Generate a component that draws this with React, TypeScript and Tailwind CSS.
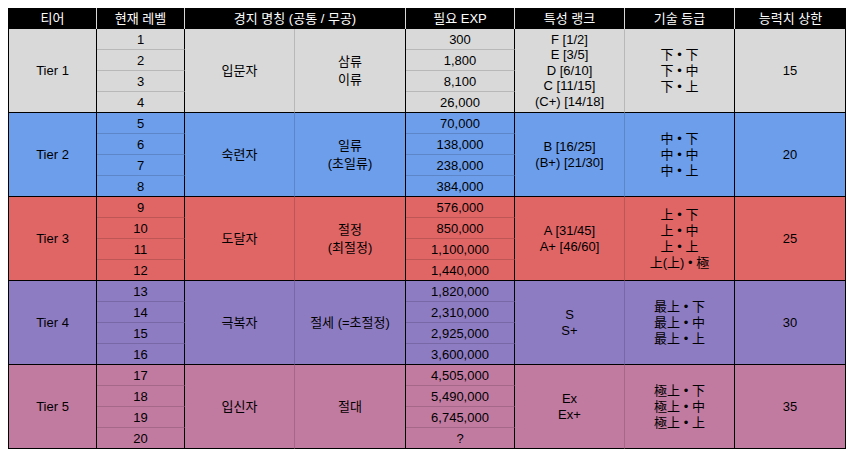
const font = "font-['Liberation_Sans','Noto_Sans_CJK_KR',sans-serif]";

interface Tier {
  name: string;
  bg: string;
  levels: string[];
  exp: string[];
  title: string;
  sub: string[];
  rank: string[];
  tech: string[];
  stat: string;
}

const tiers: Tier[] = [
  {
    name: "Tier 1",
    bg: "bg-[#d9d9d9]",
    levels: ["1", "2", "3", "4"],
    exp: ["300", "1,800", "8,100", "26,000"],
    title: "입문자",
    sub: ["삼류", "이류"],
    rank: ["F [1/2]", "E [3/5]", "D [6/10]", "C [11/15]", "(C+) [14/18]"],
    tech: ["下 • 下", "下 • 中", "下 • 上"],
    stat: "15",
  },
  {
    name: "Tier 2",
    bg: "bg-[#6d9eeb]",
    levels: ["5", "6", "7", "8"],
    exp: ["70,000", "138,000", "238,000", "384,000"],
    title: "숙련자",
    sub: ["일류", "(초일류)"],
    rank: ["B [16/25]", "(B+) [21/30]"],
    tech: ["中 • 下", "中 • 中", "中 • 上"],
    stat: "20",
  },
  {
    name: "Tier 3",
    bg: "bg-[#e06666]",
    levels: ["9", "10", "11", "12"],
    exp: ["576,000", "850,000", "1,100,000", "1,440,000"],
    title: "도달자",
    sub: ["절정", "(최절정)"],
    rank: ["A [31/45]", "A+ [46/60]"],
    tech: ["上 • 下", "上 • 中", "上 • 上", "上(上) • 極"],
    stat: "25",
  },
  {
    name: "Tier 4",
    bg: "bg-[#8e7cc3]",
    levels: ["13", "14", "15", "16"],
    exp: ["1,820,000", "2,310,000", "2,925,000", "3,600,000"],
    title: "극복자",
    sub: ["절세 (=초절정)"],
    rank: ["S", "S+"],
    tech: ["最上 • 下", "最上 • 中", "最上 • 上"],
    stat: "30",
  },
  {
    name: "Tier 5",
    bg: "bg-[#c27ba0]",
    levels: ["17", "18", "19", "20"],
    exp: ["4,505,000", "5,490,000", "6,745,000", "?"],
    title: "입신자",
    sub: ["절대"],
    rank: ["Ex", "Ex+"],
    tech: ["極上 • 下", "極上 • 中", "極上 • 上"],
    stat: "35",
  },
];

const headers = ["티어", "현재 레벨", "경지 명칭 (공통 / 무공)", "필요 EXP", "특성 랭크", "기술 등급", "능력치 상한"];

const cell = "flex items-center justify-center text-center border-r border-b";

function Lines({ items, leading }: { items: string[]; leading: string }) {
  return (
    <div className={`flex flex-col items-center ${leading}`}>
      {items.map((t) => (
        <span key={t} className="whitespace-nowrap">{t}</span>
      ))}
    </div>
  );
}

export default function App() {
  return (
    <div className={`${font} bg-white w-[855px] h-[459px] pt-2 pl-2 text-[13px] text-black`}>
      <div className="grid w-fit grid-cols-[88px_88px_110px_111px_109px_110px_110px_111px] grid-rows-[21px_repeat(20,21px)] border-l border-black">
        {headers.map((h, i) => (
          <div
            key={h}
            className={`flex items-center justify-center bg-black text-white ${
              i === 2 ? "col-span-2" : ""
            } ${i < headers.length - 1 ? "border-r border-r-[#d8d8d8]" : ""}`}
          >
            {h}
          </div>
        ))}

        {tiers.map((t) =>
          t.levels.map((lv, r) => {
            const last = r === 3;
            const rowLine = last ? "border-b-black" : "border-b-black/15";
            if (r === 0) {
              return [
                <div key={t.name} className={`${cell} ${t.bg} row-span-4 border-r-black border-b-black`}>
                  {t.name}
                </div>,
                <div key={t.name + lv} className={`${cell} ${t.bg} pt-[2px] border-r-black ${rowLine}`}>
                  {lv}
                </div>,
                <div key={t.name + "title"} className={`${cell} ${t.bg} row-span-4 border-r-black/15 border-b-black`}>
                  {t.title}
                </div>,
                <div key={t.name + "sub"} className={`${cell} ${t.bg} row-span-4 border-r-black border-b-black`}>
                  <Lines items={t.sub} leading="leading-[18px]" />
                </div>,
                <div key={t.name + "exp" + r} className={`${cell} ${t.bg} pt-[2px] border-r-black ${rowLine}`}>
                  {t.exp[r]}
                </div>,
                <div key={t.name + "rank"} className={`${cell} ${t.bg} row-span-4 border-r-black/15 border-b-black`}>
                  <Lines items={t.rank} leading="leading-[15.5px]" />
                </div>,
                <div key={t.name + "tech"} className={`${cell} ${t.bg} row-span-4 border-r-black border-b-black`}>
                  <Lines items={t.tech} leading="leading-4" />
                </div>,
                <div key={t.name + "stat"} className={`${cell} ${t.bg} row-span-4 border-r-black border-b-black`}>
                  {t.stat}
                </div>,
              ];
            }
            return [
              <div key={t.name + lv} className={`${cell} ${t.bg} pt-[2px] border-r-black ${rowLine}`}>
                {lv}
              </div>,
              <div key={t.name + "exp" + r} className={`${cell} ${t.bg} pt-[2px] border-r-black ${rowLine}`}>
                {t.exp[r]}
              </div>,
            ];
          })
        )}
      </div>
    </div>
  );
}
